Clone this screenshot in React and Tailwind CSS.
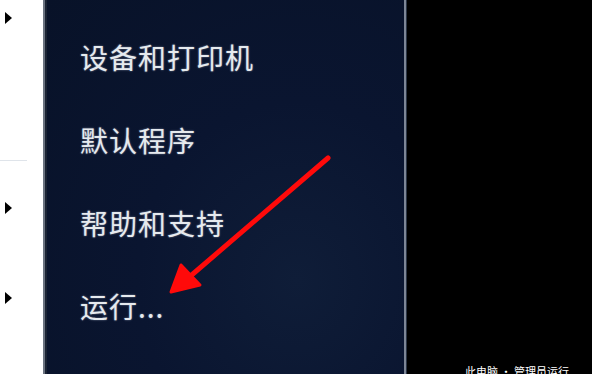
import React from 'react';

const items = ['设备和打印机', '默认程序', '帮助和支持', '运行...'];

function Tri() {
  return (
    <div className="h-0 w-0 border-y-[6px] border-l-[7px] border-y-transparent border-l-black" />
  );
}

export default function App() {
  return (
    <div className="flex h-[374px] w-[592px] overflow-hidden bg-black font-['Microsoft_YaHei','Noto_Sans_CJK_SC',sans-serif]">
      {/* 左侧白色菜单 */}
      <div className="flex w-[43px] flex-col bg-white">
        <div className="flex h-[36px] items-center pl-[5px]"><Tri /></div>
        <div className="h-[124px]" />
        <div className="h-px w-[27px] bg-[#dfe4ea]" />
        <div className="h-[47px]" />
        <div className="flex h-[0px] items-center pl-[5px]"><Tri /></div>
        <div className="h-[90px]" />
        <div className="flex h-[0px] items-center pl-[5px]"><Tri /></div>
      </div>

      {/* 边框 */}
      <div className="w-[2px] bg-[#6b7380]" />
      <div className="w-[2px] bg-[#1b2434]" />

      {/* 深色面板 */}
      <div className="relative w-[357px] bg-[radial-gradient(ellipse_at_70%_75%,#0f1d38_0%,#0a1530_45%,#081228_100%)] pt-[15px]">
        {items.map((t) => (
          <div key={t} className="flex h-[83px] items-center pl-[33px]">
            <span className="text-[28px] leading-none tracking-[1px] text-[#e6eaee] [text-shadow:0_0_2px_rgba(200,210,230,0.6)]">
              {t}
            </span>
          </div>
        ))}

        {/* 红色箭头 */}
        <svg className="absolute left-0 top-0" width="357" height="374" viewBox="0 0 357 374">
          <line x1="281" y1="158" x2="140" y2="279" stroke="#ff0a0a" strokeWidth="5" strokeLinecap="round" />
          <polygon points="124,292 134,265 153,285" fill="#ff0a0a" stroke="#ff0a0a" strokeWidth="3" strokeLinejoin="round" />
        </svg>
      </div>

      {/* 右边框 */}
      <div className="w-[2px] bg-[#7d8696]" />
      <div className="w-px bg-[#2a3444]" />

      {/* 黑色区域 */}
      <div className="relative flex-1 bg-black">
        <div className="absolute left-[58px] top-[366px] whitespace-nowrap text-[11px] leading-none text-white">
          此电脑 · 管理员运行
        </div>
      </div>
    </div>
  );
}
